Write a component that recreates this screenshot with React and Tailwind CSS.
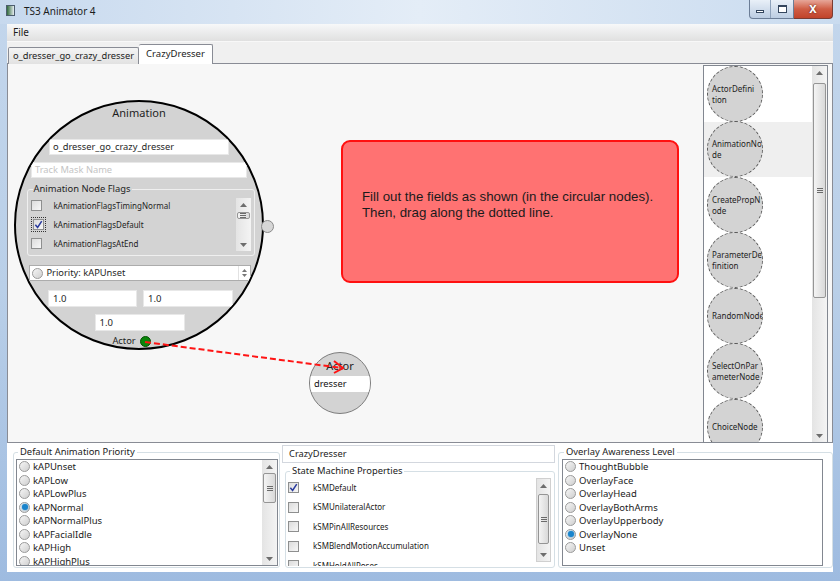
import React from "react";

const ui = "font-['Noto_Sans',sans-serif]";

function Tri({ down }) {
  return (
    <svg width="7" height="4" viewBox="0 0 7 4" className="shrink-0">
      {down ? <path d="M0 0 L7 0 L3.5 4 Z" fill="#6d6d6d" /> : <path d="M0 4 L7 4 L3.5 0 Z" fill="#6d6d6d" />}
    </svg>
  );
}

function VScroll({ className, thumb }) {
  return (
    <div className={`flex flex-col items-center w-[15px] shrink-0 bg-gradient-to-r from-[#e4e4e4] to-[#f4f4f4] ${className}`}>
      <div className="h-[13px] flex items-center justify-center"><Tri /></div>
      <div className="flex-1 w-full">
        <div className={`mx-[1px] rounded-[2px] border border-[#959595] bg-gradient-to-r from-[#f4f4f4] to-[#d9d9d9] flex items-center justify-center ${thumb}`}>
          <svg width="6" height="5" viewBox="0 0 6 5">
            <path d="M0 0.5 H6 M0 2.5 H6 M0 4.5 H6" stroke="#6a6a6a" strokeWidth="1" />
          </svg>
        </div>
      </div>
      <div className="h-[13px] flex items-center justify-center"><Tri down /></div>
    </div>
  );
}

function Radio({ checked }) {
  return (
    <span className="w-[11px] h-[11px] rounded-full border border-[#9a9a9a] bg-gradient-to-br from-[#f6f6f6] to-[#cfcfcf] flex items-center justify-center shrink-0">
      {checked && <span className="w-[6px] h-[6px] rounded-full bg-[#1a84cc] shadow-[0_0_2px_#2f9ae0]" />}
    </span>
  );
}

function Check({ checked, focus }) {
  return (
    <span className={focus ? "p-[1px] border border-dotted border-[#333] shrink-0" : "shrink-0"}>
      <span className="w-[11px] h-[11px] border border-[#8e8f8f] bg-gradient-to-br from-[#dcdcdc] to-[#f7f7f7] flex items-center justify-center">
        {checked && (
          <svg viewBox="0 0 10 10" className="w-[9px] h-[9px]">
            <path d="M1.5 5.2 L4 8.2 L8.6 1.2" fill="none" stroke="#2b3c9e" strokeWidth="1.7" />
          </svg>
        )}
      </span>
    </span>
  );
}

const priorities = ["kAPUnset", "kAPLow", "kAPLowPlus", "kAPNormal", "kAPNormalPlus", "kAPFacialIdle", "kAPHigh", "kAPHighPlus"];
const overlays = ["ThoughtBubble", "OverlayFace", "OverlayHead", "OverlayBothArms", "OverlayUpperbody", "OverlayNone", "Unset"];
const smProps = ["kSMDefault", "kSMUnilateralActor", "kSMPinAllResources", "kSMBlendMotionAccumulation", "kSMHoldAllPoses"];
// node names as they wrap inside the little circles
const nodes = [
  ["ActorDefini", "tion"],
  ["AnimationNo", "de"],
  ["CreatePropN", "ode"],
  ["ParameterDe", "finition"],
  ["RandomNode"],
  ["SelectOnPar", "ameterNode"],
  ["ChoiceNode"],
];
const flags = ["kAnimationFlagsTimingNormal", "kAnimationFlagsDefault", "kAnimationFlagsAtEnd"];

function AnimationNode() {
  return (
    <div className="absolute left-[6px] top-[36px] w-[250px] h-[250px] rounded-full border-[2.5px] border-black bg-[#d3d3d3] overflow-hidden flex flex-col items-center text-[#1e1e1e]">
      <div className="mt-[3px] text-[11px] leading-[15px]">Animation</div>
      <div className="mt-[19px] w-[180px] h-[16px] bg-white border border-[#e8e8e8] text-[9.3px] leading-[14px] pl-[3px]">o_dresser_go_crazy_dresser</div>
      <div className="mt-[7px] w-[216px] h-[16px] bg-white border border-[#e8e8e8] text-[9.3px] leading-[14px] pl-[3px] text-[#c4c4c4]">Track Mask Name</div>
      <fieldset className="mt-[4px] ml-[3px] w-[228px] border border-[#efefef] rounded-[3px] px-[3px] pb-[2px]">
        <legend className="ml-[2px] px-[1px] text-[9.4px] leading-[14px]">Animation Node Flags</legend>
        <div className="flex">
          <div className="flex-1 flex flex-col">
            {flags.map((f, i) => (
              <div key={f} className="h-[19px] flex items-center">
                <div className="w-[22px] flex">
                  <Check checked={i === 1} focus={i === 1} />
                </div>
                <span className="ml-[1px] text-[8px]">{f}</span>
              </div>
            ))}
          </div>
          <VScroll className="h-[53px] mt-[2px]" thumb="mt-[1px] h-[7px]" />
        </div>
      </fieldset>
      <div className="mt-[9px] ml-[1px] w-[222px] h-[16px] bg-white border border-[#acacac] flex items-center pl-[2px]">
        <Radio />
        <span className="ml-[4px] text-[9.3px] leading-[14px] flex-1">Priority: kAPUnset</span>
        <div className="w-[12px] h-full flex flex-col items-center justify-center gap-[2px] border-l border-[#e2e2e2]">
          <svg width="5" height="3" viewBox="0 0 5 3"><path d="M0 3 L5 3 L2.5 0 Z" fill="#777" /></svg>
          <svg width="5" height="3" viewBox="0 0 5 3"><path d="M0 0 L5 0 L2.5 3 Z" fill="#777" /></svg>
        </div>
      </div>
      <div className="mt-[9px] ml-[3px] flex gap-[6px]">
        <div className="w-[89px] h-[17px] bg-white border border-[#e8e8e8] text-[9.5px] leading-[15px] pl-[4px]">1.0</div>
        <div className="w-[90px] h-[17px] bg-white border border-[#e8e8e8] text-[9.5px] leading-[15px] pl-[4px]">1.0</div>
      </div>
      <div className="mt-[7px] ml-[1px] w-[90px] h-[17px] bg-white border border-[#e8e8e8] text-[9.5px] leading-[15px] pl-[4px]">1.0</div>
      <div className="mt-[4px] mr-[15px] flex items-center gap-[4px] h-[12px]">
        <span className="text-[9.3px] leading-[12px]">Actor</span>
        <span className="w-[11px] h-[11px] rounded-full bg-[#0b860b] border border-[#045204]" />
      </div>
    </div>
  );
}

function Canvas() {
  return (
    <div className="relative flex-1 overflow-hidden">
      <AnimationNode />
      <div className="absolute left-[253px] top-[156px] w-[13px] h-[13px] rounded-full bg-[#d6d6d6] border border-[#8a8a8a]" />
      <div className="absolute left-[301px] top-[288px] w-[62px] h-[62px] rounded-full border border-[#7d7d7d] bg-[#d3d3d3] overflow-hidden flex flex-col">
        <div className="mt-[5px] text-center text-[11px] leading-[15px] text-[#222]">Actor</div>
        <div className="mt-[3px] h-[16px] bg-white text-[9.3px] leading-[16px] pl-[4px] text-[#111]">dresser</div>
      </div>
      <div className="absolute left-[333px] top-[76px] w-[338px] h-[143px] rounded-[9px] border-2 border-[#ff1010] bg-[#ff7272] pt-[47px] pl-[19px] font-['Liberation_Sans',sans-serif] text-[13.3px] leading-[16px] text-[#1b1b1b]">
        Fill out the fields as shown (in the circular nodes).
        <br />
        Then, drag along the dotted line.
      </div>
      <svg className="absolute inset-0 pointer-events-none" width="695" height="378">
        <path d="M137 278 L334 304" stroke="#ff1414" strokeWidth="2" strokeDasharray="6 3" fill="none" />
        <path d="M326 297 L335 304 L326 309" stroke="#ff1414" strokeWidth="2" fill="none" />
      </svg>
    </div>
  );
}

function NodeList() {
  return (
    <div className="w-[125px] h-[378px] mt-[1px] mr-[4px] border border-[#828790] bg-white flex overflow-hidden">
      <div className="flex-1 flex flex-col overflow-hidden">
        {nodes.map((n, i) => (
          <div key={n.join("")} className={`h-[55.5px] shrink-0 flex items-center pl-[3px] ${i === 1 ? "bg-[#efefef]" : ""}`}>
            <div className="w-[56px] h-[56px] shrink-0 rounded-full border border-dashed border-[#5a5a5a] bg-[#d3d3d3] overflow-hidden flex flex-col justify-center">
              {n.map((line) => (
                <span key={line} className="pl-[4px] whitespace-nowrap text-[8px] leading-[11px] text-[#222]">{line}</span>
              ))}
            </div>
          </div>
        ))}
      </div>
      <VScroll className="h-full" thumb="mt-[4px] h-[215px]" />
    </div>
  );
}

function RadioList({ items, selected, scroll }) {
  return (
    <div className="flex h-[107px] border border-[#828790] bg-white overflow-hidden">
      <div className="flex-1 flex flex-col pl-[2px] overflow-hidden">
        {items.map((it) => (
          <div key={it} className="h-[13.5px] shrink-0 flex items-center gap-[3px]">
            <Radio checked={it === selected} />
            <span className="text-[9.5px] leading-[13px] text-[#1b1b1b]">{it}</span>
          </div>
        ))}
      </div>
      {scroll && <VScroll className="h-full" thumb="mt-[0px] h-[30px]" />}
    </div>
  );
}

export default function App() {
  return (
    <div className={`${ui} w-[840px] h-[581px] overflow-hidden flex flex-col bg-gradient-to-b from-[#c3d6ec] via-[#b9cfe8] to-[#9ebbe0]`}>
      <div className="h-[24px] flex items-start shrink-0 bg-gradient-to-r from-[#c7d9ee] via-[#e4edf7] to-[#c9dbef]">
        <div className="ml-[6px] mt-[5px] w-[9px] h-[11px] border border-[#4d5d6e] bg-gradient-to-r from-[#2f6a3d] to-[#e8eef3]" />
        <span className="ml-[9px] mt-[4px] text-[10px] leading-[14px] text-[#1c1c1c]">TS3 Animator 4</span>
        <div className="ml-auto mr-[7px] flex">
          <div className="w-[45px] h-[19px] flex border border-[#6b7d96] border-t-0 rounded-bl-[4px] bg-gradient-to-b from-[#e9f0f8] to-[#bccde2] overflow-hidden">
            <div className="w-[21px] flex items-center justify-center border-r border-[#8ea2bb]">
              <span className="w-[8px] h-[3px] mt-[5px] border border-[#34465e] bg-white" />
            </div>
            <div className="flex-1 flex items-center justify-center">
              <span className="w-[9px] h-[8px] border border-[#34465e] border-t-[2px] bg-white" />
            </div>
          </div>
          <div className="w-[39px] h-[19px] border border-[#7a3b32] border-t-0 border-l-0 rounded-br-[4px] bg-gradient-to-b from-[#e6a699] via-[#cf5d45] to-[#c1432a] flex items-center justify-center">
            <span className="text-white text-[11px] font-bold leading-[12px] [text-shadow:0_0_2px_#4a1a10]">X</span>
          </div>
        </div>
      </div>

      <div className="flex-1 mx-[7px] mb-[9px] flex flex-col bg-[#f0f0f0]">
        <div className="h-[18px] shrink-0 flex items-center pl-[6px] bg-gradient-to-b from-[#f7f8f9] to-[#e0e0e0] border-b border-[#f8f8f8] text-[10px] text-[#1b1b1b]">
          File
        </div>
        <div className="h-[21px] shrink-0 flex items-end pl-[1px] bg-[#f0f0f0] relative z-10">
          <div className="h-[17px] -mb-[1px] w-[131px] border border-[#898c95] border-b-0 rounded-t-[2px] bg-gradient-to-b from-[#f4f4f4] to-[#e2e2e2] text-[9.3px] leading-[16px] text-center text-[#1b1b1b] whitespace-nowrap">
            o_dresser_go_crazy_dresser
          </div>
          <div className="h-[20px] -mb-[1px] w-[74px] border border-[#898c95] border-b-0 border-l-0 rounded-t-[2px] bg-white text-[9.5px] leading-[18px] text-center text-[#1b1b1b]">
            CrazyDresser
          </div>
        </div>
        <div className="h-[380px] shrink-0 flex border border-[#898c95] bg-[#f7f7f7]">
          <Canvas />
          <NodeList />
        </div>
        <div className="h-[129px] shrink-0 flex bg-white">
          <div className="w-[274px] shrink-0">
            <fieldset className="mt-[2px] ml-[6px] w-[267px] h-[123px] border border-[#d5dfe5] rounded-[3px] pl-[2px] pr-[1px]">
              <legend className="ml-[2px] px-[2px] text-[9.4px] leading-[14px] text-[#1b1b1b]">Default Animation Priority</legend>
              <RadioList items={priorities} selected="kAPNormal" scroll />
            </fieldset>
          </div>
          <div className="w-[275px] shrink-0">
            <div className="mt-[2px] ml-[1px] w-[273px] h-[18px] border border-[#d3d7de] bg-white text-[9.3px] leading-[16px] pl-[6px] text-[#1b1b1b]">CrazyDresser</div>
            <fieldset className="mt-[1px] ml-[4px] w-[270px] h-[104px] border border-[#d5dfe5] rounded-[3px] pl-[2px] pr-[3px] overflow-hidden">
              <legend className="ml-[2px] px-[2px] text-[9.4px] leading-[14px] text-[#1b1b1b]">State Machine Properties</legend>
              <div className="flex h-[88px] overflow-hidden">
                <div className="flex-1 flex flex-col overflow-hidden">
                  {smProps.map((p, i) => (
                    <div key={p} className="h-[19.5px] shrink-0 flex items-center">
                      <Check checked={i === 0} />
                      <span className="ml-[14px] text-[8px] text-[#1b1b1b]">{p}</span>
                    </div>
                  ))}
                </div>
                <VScroll className="h-[84px] border border-[#d0d0d0]" thumb="mt-[2px] h-[50px]" />
              </div>
            </fieldset>
          </div>
          <div className="flex-1">
            <fieldset className="mt-[2px] ml-[2px] h-[123px] border border-[#d5dfe5] rounded-[3px] pl-[3px] pr-[9px]">
              <legend className="ml-[2px] px-[2px] text-[9.4px] leading-[14px] text-[#1b1b1b]">Overlay Awareness Level</legend>
              <RadioList items={overlays} selected="OverlayNone" />
            </fieldset>
          </div>
        </div>
      </div>
    </div>
  );
}
